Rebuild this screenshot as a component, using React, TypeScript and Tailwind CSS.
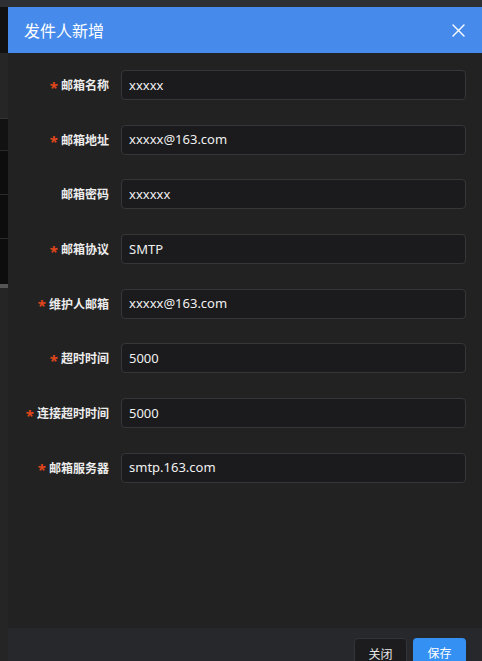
import React from "react";

const rows: { label: string; value: string; required: boolean }[] = [
  { label: "邮箱名称", value: "xxxxx", required: true },
  { label: "邮箱地址", value: "xxxxx@163.com", required: true },
  { label: "邮箱密码", value: "xxxxxx", required: false },
  { label: "邮箱协议", value: "SMTP", required: true },
  { label: "维护人邮箱", value: "xxxxx@163.com", required: true },
  { label: "超时时间", value: "5000", required: true },
  { label: "连接超时时间", value: "5000", required: true },
  { label: "邮箱服务器", value: "smtp.163.com", required: true },
];

export default function App() {
  return (
    <div
      className="w-[482px] h-[661px] overflow-hidden flex flex-col bg-[#2e2f33]"
      style={{ fontFamily: '"Noto Sans", "Noto Sans CJK SC", sans-serif' }}
    >
      <div className="h-[7px] shrink-0 bg-[#2e2f33]" />
      <div className="flex flex-1 min-h-0">
        {/* background strip behind the dialog */}
        <div className="w-[8px] shrink-0 flex flex-col bg-[#242424]">
          <div className="h-[46px] bg-[#111111]" />
          <div className="h-[66px] bg-[#262626] border-b border-[#333]" />
          <div className="h-[32px] bg-[#121212] border-b border-[#2a2a2a]" />
          <div className="h-[44px] bg-[#0d0d0d] border-b border-[#2a2a2a]" />
          <div className="h-[44px] bg-[#0d0d0d] border-b border-[#2a2a2a]" />
          <div className="h-[45px] bg-[#0d0d0d]" />
          <div className="h-[4px] bg-[#555]" />
          <div className="flex-1 bg-[#252525]" />
        </div>
        {/* dialog */}
        <div className="flex-1 flex flex-col bg-[#222222] min-w-0">
          <div className="h-[46px] shrink-0 bg-[#468bec] flex items-center justify-between pl-[16px] pr-[17px]">
            <span className="text-white text-[16px] leading-none" style={{ fontFamily: '"Noto Sans CJK SC", sans-serif' }}>
              发件人新增
            </span>
            <svg width="13" height="13" viewBox="0 0 13 13" className="mt-[1px]">
              <path d="M1 1 L12 12 M12 1 L1 12" stroke="white" strokeWidth="1.4" strokeLinecap="round" />
            </svg>
          </div>
          <div className="flex-1 pt-[17px] pr-[16px] flex flex-col gap-[24.7px]">
            {rows.map((r) => (
              <div key={r.label} className="flex items-center h-[30px]">
                <div className="w-[113px] shrink-0 flex justify-end items-center pr-[12px]">
                  {r.required && (
                    <span className="text-[#e0461c] text-[15px] font-bold mr-[3px] leading-none mt-[4px]">*</span>
                  )}
                  <span
                    className="text-[#ececec] text-[12px] font-bold leading-none"
                    style={{ fontFamily: '"Noto Sans CJK SC", sans-serif' }}
                  >
                    {r.label}
                  </span>
                </div>
                <div className="flex-1 h-[30px] rounded-[4px] border border-[#353638] bg-[#1b1b1d] flex items-center pl-[7px]">
                  <span className="text-[#f0f0f0] text-[13px] leading-none">{r.value}</span>
                </div>
              </div>
            ))}
          </div>
          <div className="h-[33px] shrink-0 bg-[#27282c] flex items-start justify-end gap-[6px] pr-[16px] pt-[10px]">
            <div
              className="w-[53px] h-[32px] rounded-[4px] bg-[#1c1c1e] border border-[#333437] flex items-start justify-center pt-[6px] text-[12px] text-[#e8e8e8]"
              style={{ fontFamily: '"Noto Sans CJK SC", sans-serif' }}
            >
              关闭
            </div>
            <div
              className="w-[53px] h-[32px] rounded-[4px] bg-[#3590f3] flex items-start justify-center pt-[6px] text-[12px] text-white"
              style={{ fontFamily: '"Noto Sans CJK SC", sans-serif' }}
            >
              保存
            </div>
          </div>
        </div>
      </div>
    </div>
  );
}
